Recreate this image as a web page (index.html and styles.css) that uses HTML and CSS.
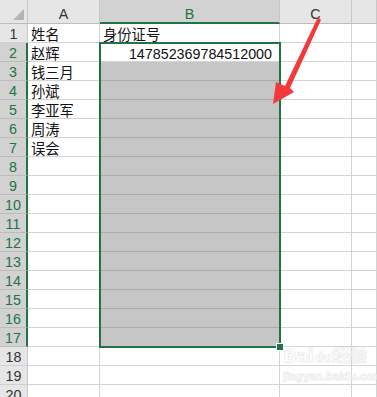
FILE: index.html
```html
<!DOCTYPE html>
<html lang="zh">

<head>
    <meta charset="UTF-8">
    <meta name="viewport" content="width=device-width, initial-scale=1.0">
    <title>身份证号</title>
    <link rel="stylesheet" href="styles.css">
</head>

<body>
    <section class="sheet">
        <div class="grid" id="cells">
            <div class="corner"><span class="tri"></span></div>
            <div class="col-h">A</div>
            <div class="col-h sel">B</div>
            <div class="col-h">C</div>
            <div class="col-h"></div>
        </div>
        <div class="grid overlay">
            <div class="selection"><span class="handle"></span></div>
        </div>
    </section>
    <svg class="arrow" width="377" height="397" viewBox="0 0 377 397">
        <polygon points="318,17 321,20 290,88 294,92 273,104 276,82 285,86" fill="#f23a3d" />
    </svg>
    <div class="watermark">
        <div class="wm-logo">Bai<span class="paw">du</span>经验</div>
        <div class="wm-url">jingyan.baidu.com</div>
    </div>
    <script>
        const cells = document.getElementById('cells');
        const names = ['姓名', '赵辉', '钱三月', '孙斌', '李亚军', '周涛', '误会'];
        const ids = { 1: '身份证号', 2: '147852369784512000' };
        let html = '';
        for (let r = 1; r <= 20; r++) {
            const picked = r >= 2 && r <= 17;
            html += `<div class="row-h${picked ? ' sel' : ''}">${r}</div>`;
            html += `<div class="cell">${names[r - 1] || ''}</div>`;
            const cls = r === 2 ? 'cell num' : (picked ? 'cell hl' : 'cell');
            html += `<div class="${cls}">${ids[r] || ''}</div>`;
            html += '<div class="cell"></div><div class="cell"></div>';
        }
        cells.insertAdjacentHTML('beforeend', html);
    </script>
</body>

</html>
```

FILE: styles.css
```css
body {
    margin: 0;
    width: 377px;
    height: 397px;
    overflow: hidden;
    background-color: #ffffff;
    font-family: "Liberation Sans", "Noto Sans CJK SC", sans-serif;
    position: relative;
}

.sheet {
    display: grid;
    height: 397px;
    overflow: hidden;
}

.grid {
    grid-area: 1 / 1;
    display: grid;
    grid-template-columns: 28px 72px 180px 72px 1fr;
    grid-template-rows: 24px repeat(20, 19px);
}

.overlay {
    pointer-events: none;
}

.corner,
.col-h,
.row-h {
    background-color: #e6e6e6;
    box-sizing: border-box;
    border-right: 1px solid #c8c8c8;
    border-bottom: 1px solid #c8c8c8;
    color: #333;
    font-size: 14.3px;
    text-align: center;
}

.corner {
    position: relative;
    border-bottom-color: #bdbdbd;
}

.corner .tri {
    position: absolute;
    right: 3px;
    bottom: 3px;
    width: 0;
    height: 0;
    border-left: 11px solid transparent;
    border-bottom: 11px solid #b4b4b4;
}

.col-h {
    line-height: 24px;
    padding-top: 2px;
    border-bottom-color: #bdbdbd;
}

.col-h.sel {
    background-color: #d2d2d2;
    color: #217346;
    border-bottom: 2px solid #217346;
}

.row-h {
    line-height: 19px;
    padding-top: 1px;
    border-bottom-color: #d0d0d0;
}

.row-h.sel {
    background-color: #d2d2d2;
    color: #217346;
    border-bottom-color: #bcbcbc;
    border-right: 2px solid #217346;
}

.cell {
    box-sizing: border-box;
    border-right: 1px solid #d4d4d4;
    border-bottom: 1px solid #d4d4d4;
    font-size: 14.3px;
    line-height: 19px;
    padding: 2px 0 0 3px;
    color: #111;
    white-space: nowrap;
}

.cell.num {
    text-align: right;
    padding-right: 7px;
}

.cell.hl {
    background-color: #c6c6c6;
    border-bottom-color: #ababab;
}

.selection {
    grid-column: 3;
    grid-row: 3 / 19;
    margin: -1px;
    border: 2px solid #217346;
    position: relative;
}

.selection .handle {
    position: absolute;
    right: -5px;
    bottom: -5px;
    width: 6px;
    height: 6px;
    background-color: #217346;
    border: 1px solid #ffffff;
}

.arrow {
    position: absolute;
    left: 0;
    top: 0;
}

.watermark {
    position: absolute;
    left: 283px;
    top: 347px;
    color: rgba(255, 255, 255, 0.6);
    -webkit-text-stroke: 1px rgba(170, 170, 170, 0.22);
    font-family: "DejaVu Sans", "Noto Sans CJK SC", sans-serif;
    font-weight: bold;
    line-height: 1;
    white-space: nowrap;
}

.wm-logo {
    font-size: 18px;
    letter-spacing: -0.5px;
}

.paw {
    font-size: 12px;
    padding: 0 1px;
}

.wm-url {
    font-size: 10px;
    margin-top: 7px;
    letter-spacing: -0.3px;
}
```
